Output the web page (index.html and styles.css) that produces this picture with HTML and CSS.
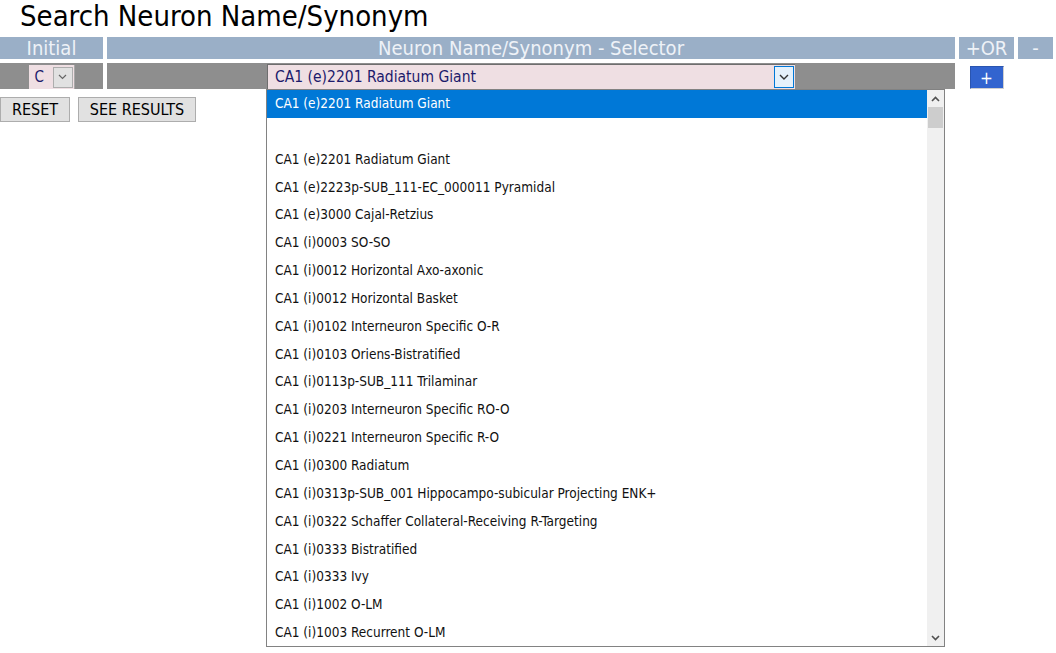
FILE: index.html
```html
<!DOCTYPE html>
<html>
<head>
<meta charset="utf-8">
<link rel="stylesheet" href="styles.css">
</head>
<body>
<h1 class="title">Search Neuron Name/Synonym</h1>
<div class="grid">
  <div class="hcell">Initial</div>
  <div class="hcell">Neuron Name/Synonym - Selector</div>
  <div class="hcell">+OR</div>
  <div class="hcell">-</div>

  <div class="dcell">
    <div class="sel sel-init">
      <span class="sel-val">C</span>
      <span class="sel-arrow"><svg width="9" height="6" viewBox="0 0 9 6"><path d="M1 1 L4.5 4.5 L8 1" fill="none" stroke="#666" stroke-width="1.2"/></svg></span>
    </div>
  </div>
  <div class="dcell">
    <div class="sel sel-neuron">
      <span class="sel-val">CA1 (e)2201 Radiatum Giant</span>
      <span class="sel-arrow focus"><svg width="10" height="6" viewBox="0 0 10 6"><path d="M1 1 L5 5 L9 1" fill="none" stroke="#333" stroke-width="1.4"/></svg></span>
    </div>
  </div>
  <div class="ecell"><button class="plus">+</button></div>
  <div class="ecell"></div>
</div>
<div class="actions">
  <button class="btn">RESET</button>
  <button class="btn">SEE RESULTS</button>
</div>

<div class="dropdown">
  <ul class="options">
    <li class="opt selected">CA1 (e)2201 Radiatum Giant</li>
    <li class="opt">&nbsp;</li>
    <li class="opt">CA1 (e)2201 Radiatum Giant</li>
    <li class="opt">CA1 (e)2223p-SUB_111-EC_000011 Pyramidal</li>
    <li class="opt">CA1 (e)3000 Cajal-Retzius</li>
    <li class="opt">CA1 (i)0003 SO-SO</li>
    <li class="opt">CA1 (i)0012 Horizontal Axo-axonic</li>
    <li class="opt">CA1 (i)0012 Horizontal Basket</li>
    <li class="opt">CA1 (i)0102 Interneuron Specific O-R</li>
    <li class="opt">CA1 (i)0103 Oriens-Bistratified</li>
    <li class="opt">CA1 (i)0113p-SUB_111 Trilaminar</li>
    <li class="opt">CA1 (i)0203 Interneuron Specific RO-O</li>
    <li class="opt">CA1 (i)0221 Interneuron Specific R-O</li>
    <li class="opt">CA1 (i)0300 Radiatum</li>
    <li class="opt">CA1 (i)0313p-SUB_001 Hippocampo-subicular Projecting ENK+</li>
    <li class="opt">CA1 (i)0322 Schaffer Collateral-Receiving R-Targeting</li>
    <li class="opt">CA1 (i)0333 Bistratified</li>
    <li class="opt">CA1 (i)0333 Ivy</li>
    <li class="opt">CA1 (i)1002 O-LM</li>
    <li class="opt">CA1 (i)1003 Recurrent O-LM</li>
  </ul>
  <div class="scrollbar">
    <div class="sb-btn"><svg width="9" height="6" viewBox="0 0 9 6"><path d="M1 5 L4.5 1.5 L8 5" fill="none" stroke="#505050" stroke-width="1.6"/></svg></div>
    <div class="sb-thumb"></div>
    <div class="sb-track"></div>
    <div class="sb-btn"><svg width="9" height="6" viewBox="0 0 9 6"><path d="M1 1 L4.5 4.5 L8 1" fill="none" stroke="#505050" stroke-width="1.6"/></svg></div>
  </div>
</div>
</body>
</html>
```
FILE: styles.css
```css
* { box-sizing: border-box; }
body {
  margin: 0;
  font-family: "DejaVu Sans Condensed", "DejaVu Sans", sans-serif;
  background: #fff;
  color: #000;
}
.title {
  margin: 0;
  height: 37px;
  padding-left: 20px;
  font-size: 29px;
  font-weight: normal;
  line-height: 33px;
  color: #000;
}
.grid {
  display: grid;
  grid-template-columns: 103px 848px 55px 35px;
  grid-template-rows: 22px 26px;
  column-gap: 4px;
  row-gap: 4px;
}
.hcell {
  background: #9aafc7;
  color: #eef2f7;
  font-size: 20px;
  line-height: 22px;
  text-align: center;
}
.dcell {
  background: #8e8e8e;
  display: flex;
  justify-content: center;
  align-items: center;
}
.ecell {
  display: flex;
  justify-content: center;
  align-items: flex-start;
}
.sel {
  display: flex;
  align-items: stretch;
  background: #efdfe3;
  border-top: 1px solid #6e6e6e;
  border-left: 1px solid #6e6e6e;
  color: #1c1a6b;
  font-size: 15.5px;
}
.sel-init {
  width: 46px;
  height: 24px;
  margin-top: 1px;
  border: none;
  border-right: 1px solid #a8a8a8;
  font-size: 15px;
}
.sel-init .sel-val {
  flex: 1;
  padding-left: 6px;
  line-height: 24px;
}
.sel-init .sel-arrow {
  width: 20px;
  margin: 2px 1px 1px 0;
  background: #e1e1e1;
  border: 1px solid #adadad;
  display: flex;
  align-items: center;
  justify-content: center;
}
.sel-neuron {
  width: 528px;
  height: 25px;
  margin-top: 1px;
}
.sel-neuron .sel-val {
  flex: 1;
  padding-left: 7px;
  line-height: 24px;
}
.sel-arrow.focus {
  width: 20px;
  margin: 1px 1px 1px 0;
  background: #e5f1fb;
  border: 1px solid #0078d7;
  display: flex;
  align-items: center;
  justify-content: center;
}
.plus {
  margin-top: 3px;
  width: 34px;
  height: 23px;
  background: #3264cf;
  color: #fff;
  border: 1px solid #2a55b0;
  border-bottom-color: #cfcfcf;
  border-right-color: #cfcfcf;
  font-family: "DejaVu Sans Condensed", "DejaVu Sans", sans-serif;
  font-size: 17px;
  line-height: 18px;
  padding: 0;
}
.actions {
  display: flex;
  gap: 8px;
  margin-top: 8px;
}
.btn {
  height: 25px;
  padding: 0;
  background: #e1e1e1;
  border: 1px solid #adadad;
  font-family: "DejaVu Sans Condensed", "DejaVu Sans", sans-serif;
  font-size: 16px;
  color: #000;
}
.btn:first-child { width: 70px; }
.btn:last-child { width: 118px; }
.dropdown {
  position: absolute;
  left: 266px;
  top: 89px;
  width: 679px;
  height: 558px;
  background: #fff;
  border: 1px solid #828282;
  display: flex;
}
.options {
  list-style: none;
  margin: 0;
  padding: 0;
  flex: 1;
  overflow: hidden;
}
.opt {
  height: 27.85px;
  line-height: 27px;
  padding-left: 8px;
  font-size: 13.5px;
  color: #111;
  white-space: nowrap;
}
.opt.selected {
  background: #0078d7;
  color: #fff;
}
.scrollbar {
  width: 17px;
  background: #f0f0f0;
  display: flex;
  flex-direction: column;
}
.sb-btn {
  height: 17px;
  display: flex;
  align-items: center;
  justify-content: center;
}
.sb-thumb {
  height: 21px;
  margin: 0 1px;
  background: #cdcdcd;
}
.sb-track { flex: 1; }
```
